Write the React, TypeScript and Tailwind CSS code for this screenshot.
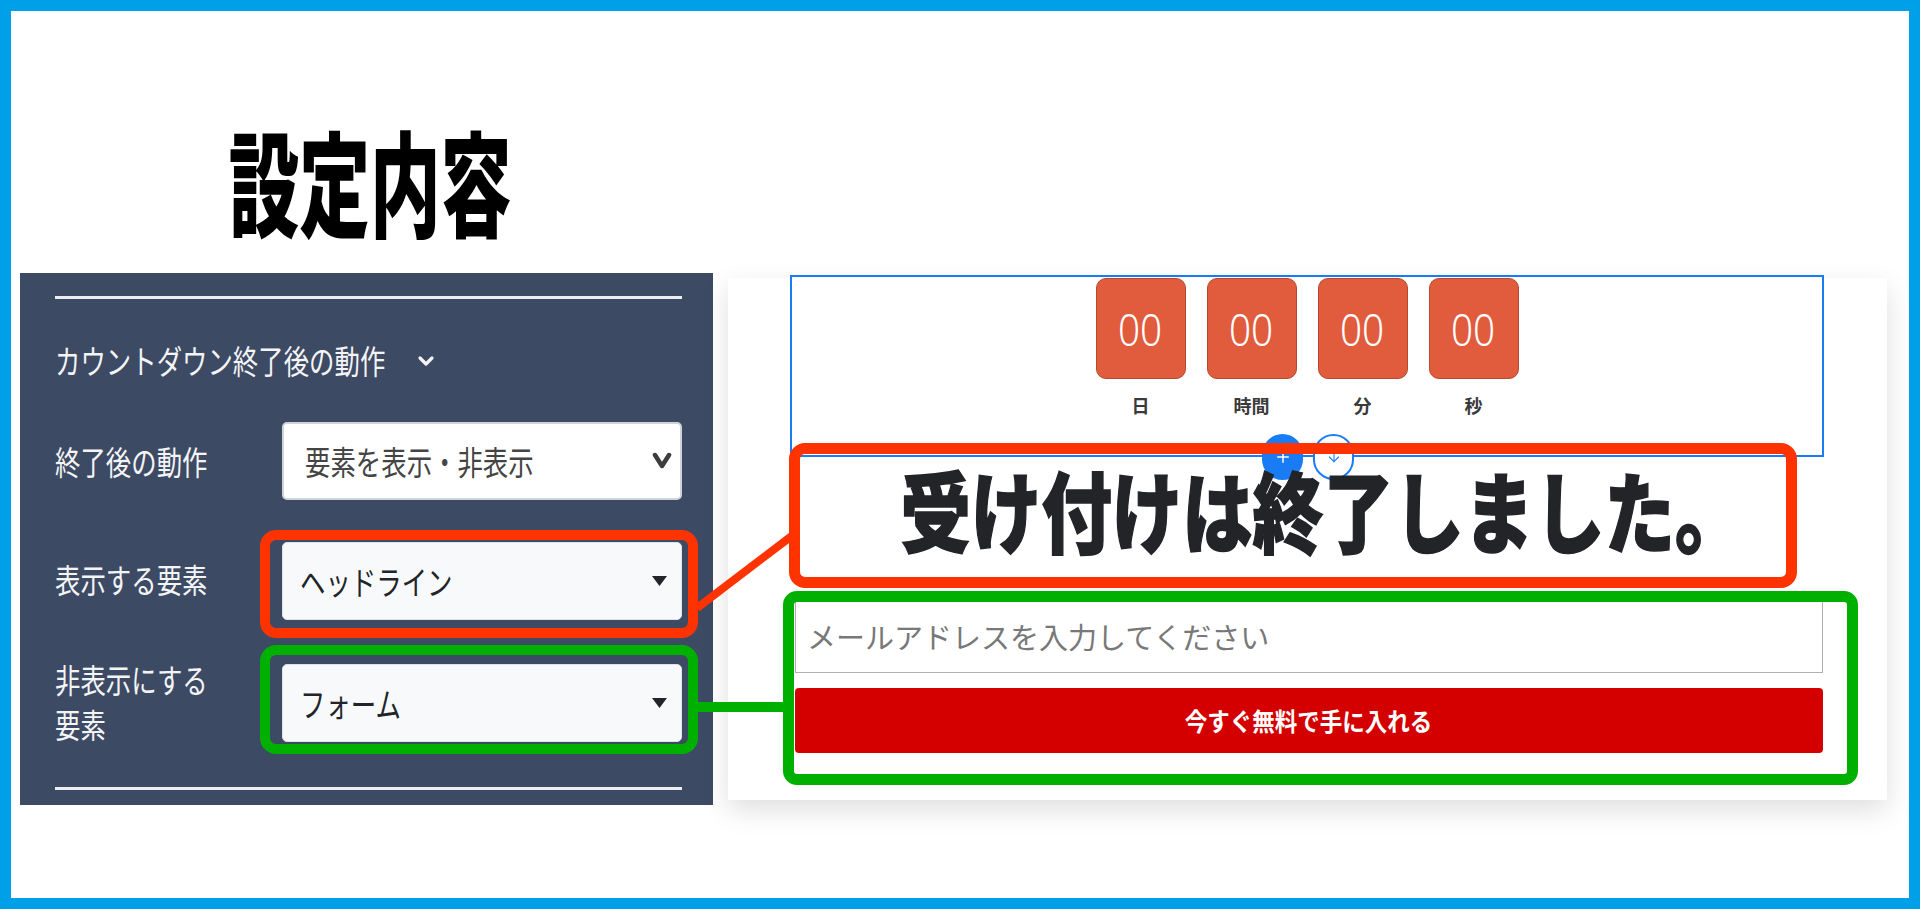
import { ChevronDown, Plus, ArrowDown } from 'lucide-react'

const units = ['日', '時間', '分', '秒']

function Sq({ children }: { children: React.ReactNode }) {
  return <span className="inline-block origin-left scale-x-[0.77] whitespace-nowrap">{children}</span>
}

function Caret() {
  return (
    <svg width="15" height="10" viewBox="0 0 15 10">
      <path d="M0 0h15L7.5 10z" fill="#212529" />
    </svg>
  )
}

function BoldChevron() {
  return (
    <svg width="20" height="18" viewBox="0 0 20 18">
      <path d="M3 3 10 14l7-11" fill="none" stroke="#3d3d3d" strokeWidth="4.5" strokeLinecap="round" strokeLinejoin="round" />
    </svg>
  )
}

function Dropdown({ label }: { label: string }) {
  return (
    <div className="flex h-[78px] w-[400px] items-center justify-between rounded-[5px] border border-[#dfe3e8] bg-[#f8f9fa] pl-[17px] pr-[14px]">
      <span className="text-[33px] leading-none text-[#212529]">
        <Sq>{label}</Sq>
      </span>
      <Caret />
    </div>
  )
}

function SettingsPanel() {
  return (
    <div className="w-[693px] bg-[#3d4a63] pb-[15px] pl-[35px] pr-[31px] pt-[23px] text-[#f3f4f6]">
      <div className="h-[3px] bg-[#eceef1]" />

      <div className="mt-[45px] flex h-[33px] items-center">
        <span className="w-[330px] text-[33px] leading-none">
          <Sq>カウントダウン終了後の動作</Sq>
        </span>
        <ChevronDown className="ml-[29px]" size={24} strokeWidth={3.2} />
      </div>

      <div className="mt-[45px] flex items-center">
        <div className="w-[227px] shrink-0 text-[33px] leading-none">
          <Sq>終了後の動作</Sq>
        </div>
        <div className="flex h-[78px] w-[400px] shrink-0 items-center justify-between rounded-[5px] border-2 border-[#cfd4da] bg-white pl-[21px] pr-[8px]">
          <span className="text-[33px] leading-none text-[#444]">
            <Sq>要素を表示・非表示</Sq>
          </span>
          <BoldChevron />
        </div>
      </div>

      <div className="mt-[30px] flex items-center">
        <div className="mb-[10px] w-[205px] shrink-0 text-[33px] leading-none">
          <Sq>表示する要素</Sq>
        </div>
        <div className="w-[438px] shrink-0 rounded-[16px] border-[10px] border-[#ff3300] pb-[8px] pl-[12px] pr-[6px] pt-[2px]">
          <Dropdown label="ヘッドライン" />
        </div>
      </div>

      <div className="mt-[7px] flex items-center">
        <div className="mt-[4px] w-[205px] shrink-0 text-[33px] leading-[45px]">
          <Sq>非表示にする</Sq>
          <br />
          <Sq>要素</Sq>
        </div>
        <div className="w-[438px] shrink-0 rounded-[16px] border-[10px] border-[#00b000] pb-[2px] pl-[12px] pr-[6px] pt-[9px]">
          <Dropdown label="フォーム" />
        </div>
      </div>

      <div className="mt-[33px] h-[3px] bg-[#eceef1]" />
    </div>
  )
}

function PreviewCard() {
  return (
    <div className="relative mt-[267px] h-[522px] w-[1159px] shrink-0 bg-white shadow-[0_10px_26px_rgba(0,0,0,0.13)]">
      {/* countdown block, selected in the editor */}
      <div className="relative -mt-[3px] ml-[62px] h-[182px] w-[1034px] border-2 border-[#1a7cf5] pt-px">
        <div className="flex justify-center gap-[21px]">
          {units.map((u) => (
            <div key={u} className="flex w-[90px] flex-col items-center">
              <div className="flex h-[101px] w-[90px] items-center justify-center rounded-[10px] border border-[#b9472d] bg-[#e05c3c] font-['Noto_Sans',sans-serif] text-[44px] font-light text-white">
                <span className="inline-block scale-x-[0.88]">00</span>
              </div>
              <div className="mt-[14px] text-[18px] font-bold leading-[24px] text-[#3a3a3a]">{u}</div>
            </div>
          ))}
        </div>
        <div className="absolute left-[470px] top-[157px] flex h-[46px] w-[41px] items-center justify-center rounded-full bg-[#1a7cf5] text-white">
          <Plus size={18} strokeWidth={2} />
        </div>
        <div className="absolute left-[521px] top-[157px] flex h-[46px] w-[41px] items-center justify-center rounded-full border-2 border-[#1a7cf5] bg-white text-[#1a7cf5]">
          <ArrowDown size={16} strokeWidth={1.6} />
        </div>
      </div>

      <h2 className="ml-[67px] mt-[7px] w-[1028px] pr-[36px] text-center text-[88px] font-black leading-none text-[#222428]">
        <span className="inline-block origin-center scale-x-[0.8] whitespace-nowrap [-webkit-text-stroke:1.5px_#222428]">
          受け付けは終了しました。
        </span>
      </h2>

      <input
        readOnly
        placeholder="メールアドレスを入力してください"
        className="ml-[67px] mt-[46px] block h-[75px] w-[1028px] border border-[#b0b0b0] bg-white pl-[11px] text-[29px] outline-none placeholder:text-[#787878]"
      />

      <button className="ml-[67px] mt-[15px] flex h-[65px] w-[1028px] items-center justify-center rounded-[4px] bg-[#d40000] text-[25px] font-bold text-white">
        <span className="inline-block origin-center scale-x-[0.9] whitespace-nowrap">今すぐ無料で手に入れる</span>
      </button>

      {/* annotation boxes */}
      <div className="absolute left-[61px] top-[165px] h-[145px] w-[1008px] rounded-[16px] border-[11px] border-[#ff3300]" />
      <div className="absolute left-[55px] top-[313px] h-[194px] w-[1075px] rounded-[14px] border-[11px] border-[#00b000]" />
    </div>
  )
}

export default function App() {
  return (
    <div className="relative h-[909px] w-full overflow-hidden bg-[#00a0e9] p-[11px] font-['Noto_Sans_CJK_JP',sans-serif]">
      <div className="h-full bg-white pl-[9px]">
        <div className="flex gap-[15px]">
          <div className="flex w-[693px] shrink-0 flex-col">
            <div className="h-[262px] pl-[7px] pt-[111px] text-center">
              <h1 className="inline-block origin-center scale-x-[0.62] whitespace-nowrap text-[114px] font-black leading-none text-black">
                設定内容
              </h1>
            </div>
            <SettingsPanel />
          </div>
          <PreviewCard />
        </div>
      </div>

      {/* connectors between the settings and the preview */}
      <svg className="pointer-events-none absolute left-0 top-0" width="1920" height="909">
        <line x1="697" y1="608" x2="793" y2="535" stroke="#ff3300" strokeWidth="8" />
        <line x1="697" y1="707" x2="787" y2="707" stroke="#00b000" strokeWidth="10" />
      </svg>
    </div>
  )
}
